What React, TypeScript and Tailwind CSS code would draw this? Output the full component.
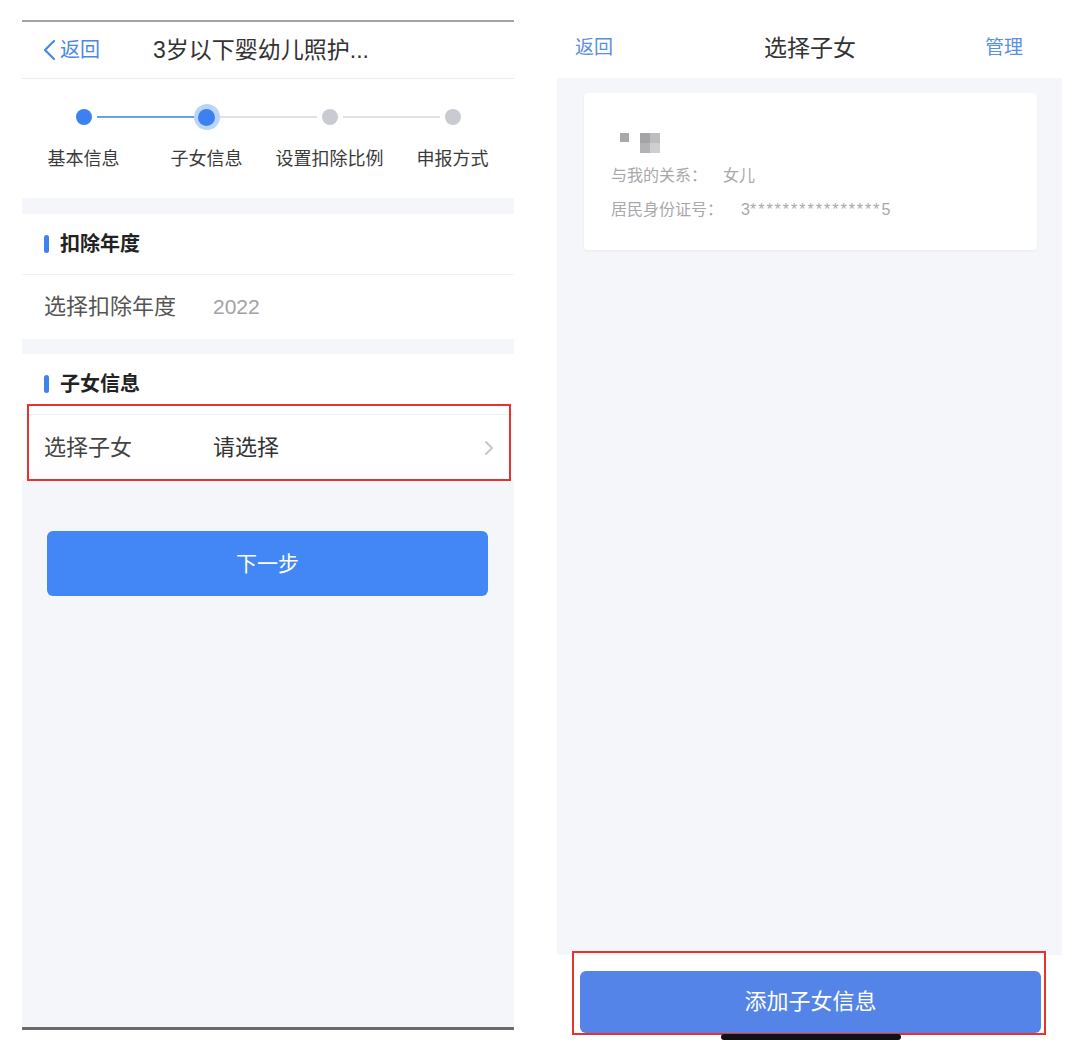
const font = "font-['Liberation_Sans','Noto_Sans_CJK_SC',sans-serif]";

const steps = [
  { label: "基本信息", left: "bg-transparent", right: "bg-[#6d9ee6]", dot: "done" },
  { label: "子女信息", left: "bg-[#6d9ee6]", right: "bg-[#e1e2e6]", dot: "active" },
  { label: "设置扣除比例", left: "bg-[#e1e2e6]", right: "bg-[#e1e2e6]", dot: "todo" },
  { label: "申报方式", left: "bg-[#e1e2e6]", right: "bg-transparent", dot: "todo" },
];

const Dot = ({ state }: { state: string }) => {
  if (state === "active") {
    return (
      <div className="w-[26px] h-[26px] rounded-full bg-[#b9d5fb] flex items-center justify-center shrink-0">
        <div className="w-[17px] h-[17px] rounded-full bg-[#3c80f2]" />
      </div>
    );
  }
  return (
    <div className="w-[26px] h-[26px] flex items-center justify-center shrink-0">
      <div className={`w-[16px] h-[16px] rounded-full ${state === "done" ? "bg-[#3c80f2]" : "bg-[#c9cad2]"}`} />
    </div>
  );
};

const SectionTitle = ({ title }: { title: string }) => (
  <div className="h-[61px] flex items-center pl-[22px] border-b border-[#f0f1f3]">
    <div className="w-[5px] h-[18px] rounded-full bg-[#3f82f0]" />
    <span className="ml-[11px] text-[20px] leading-[24px] font-bold text-[#222]">{title}</span>
  </div>
);

const LeftScreen = () => (
  <div className="relative w-[492px] pt-[20px]">
    {/* nav bar */}
    <div className="h-[59px] border-t-2 border-[#a3a3a3] border-b border-b-[#ececee] flex items-center">
      <div className="flex items-center pl-[20px] w-[131px]">
        <svg width="16" height="22" viewBox="0 0 16 22" className="shrink-0">
          <polyline points="12,2 3,11 12,20" fill="none" stroke="#4a86e8" strokeWidth="2.2" strokeLinecap="round" strokeLinejoin="round" />
        </svg>
        <span className="ml-[2px] text-[20px] leading-[24px] text-[#4a86e8]">返回</span>
      </div>
      <span className="text-[23px] leading-[28px] text-[#333]">3岁以下婴幼儿照护...</span>
    </div>

    {/* steps */}
    <div className="pt-[25px] pb-[27px] grid grid-cols-4">
      {steps.map((s) => (
        <div key={s.label} className="flex flex-col items-center">
          <div className="w-full flex items-center">
            <div className={`flex-1 h-[2px] ${s.left}`} />
            <Dot state={s.dot} />
            <div className={`flex-1 h-[2px] ${s.right}`} />
          </div>
          <span className="mt-[17px] text-[18px] leading-[24px] text-[#3a3a3a] whitespace-nowrap">{s.label}</span>
        </div>
      ))}
    </div>

    <div className="h-[16px] bg-[#f5f6fa]" />

    <SectionTitle title="扣除年度" />
    <div className="h-[64px] flex items-center pl-[22px]">
      <span className="w-[169px] text-[22px] leading-[26px] text-[#555]">选择扣除年度</span>
      <span className="text-[21px] leading-[26px] text-[#a2a2a6]">2022</span>
    </div>

    <div className="h-[15px] bg-[#f5f6fa]" />

    <SectionTitle title="子女信息" />
    <div className="h-[65px] flex items-center pl-[22px] pr-[20px]">
      <span className="w-[169px] text-[22px] leading-[26px] text-[#444]">选择子女</span>
      <span className="flex-1 text-[22px] leading-[26px] text-[#333]">请选择</span>
      <svg width="10" height="16" viewBox="0 0 10 16">
        <polyline points="2,2 8,8 2,14" fill="none" stroke="#c4c4c8" strokeWidth="1.8" strokeLinecap="round" strokeLinejoin="round" />
      </svg>
    </div>

    <div className="h-[550px] bg-[#f5f6fa] pt-[51px] pl-[25px] pr-[26px] border-b-[3px] border-[#6a6a6a]">
      <button className="w-full h-[65px] rounded-[6px] bg-[#4287f5] text-white text-[21px] leading-[26px]">下一步</button>
    </div>

    <div className="absolute left-[5px] top-[404px] w-[484px] h-[77px] border-2 border-[#e8322f]" />
  </div>
);

const RightScreen = () => (
  <div className="relative w-[505px] h-[1052px] flex flex-col">
    <div className="h-[78px] pt-[18px] flex items-center pl-[18px] pr-[39px]">
      <span className="text-[19px] leading-[24px] text-[#5b8fe2] w-[82px]">返回</span>
      <span className="flex-1 text-center text-[23px] leading-[26px] text-[#333]">选择子女</span>
      <span className="text-[19px] leading-[24px] text-[#5b8fe2] w-[60px] text-right">管理</span>
    </div>

    <div className="h-[877px] bg-[#f5f6fa] pt-[15px] pl-[27px] pr-[25px]">
      <div className="bg-white rounded-[4px] shadow-[0_1px_3px_rgba(0,0,0,0.05)] pt-[40px] pb-[28px] pl-[27px]">
        {/* blurred name */}
        <div className="flex items-start h-[20px] pl-[9px]">
          <div className="w-[9px] h-[9px] bg-[#a9a9ab]" />
          <div className="ml-[11px] w-[20px] h-[20px] grid grid-cols-2 grid-rows-2">
            <div className="bg-[#a4a4a6]" />
            <div className="bg-[#bdbdbf]" />
            <div className="bg-[#b3b3b5]" />
            <div className="bg-[#cfcfd1]" />
          </div>
        </div>
        <div className="mt-[11px] text-[16px] leading-[24px] text-[#a8a8ab]">
          与我的关系：<span className="ml-[16px]">女儿</span>
        </div>
        <div className="mt-[10px] text-[16px] leading-[24px] text-[#a8a8ab]">
          居民身份证号：<span className="ml-[18px]">3<span className="tracking-[2px]">****************</span>5</span>
        </div>
      </div>
    </div>

    <div className="flex-1 bg-white pt-[16px] pl-[23px] pr-[21px]">
      <button className="w-full h-[62px] rounded-[6px] bg-[#5484e7] text-white text-[22px] leading-[26px]">添加子女信息</button>
    </div>

    <div className="absolute left-[15px] top-[951px] w-[474px] h-[84px] border-2 border-[#e8322f]" />
    <div className="absolute left-[164px] top-[1034px] w-[180px] h-[6px] rounded-full bg-[#111]" />
  </div>
);

export default function App() {
  return (
    <div className={`w-[1080px] h-[1052px] overflow-hidden bg-white flex items-start ${font}`}>
      <div className="ml-[22px]">
        <LeftScreen />
      </div>
      <div className="ml-[43px]">
        <RightScreen />
      </div>
    </div>
  );
}
